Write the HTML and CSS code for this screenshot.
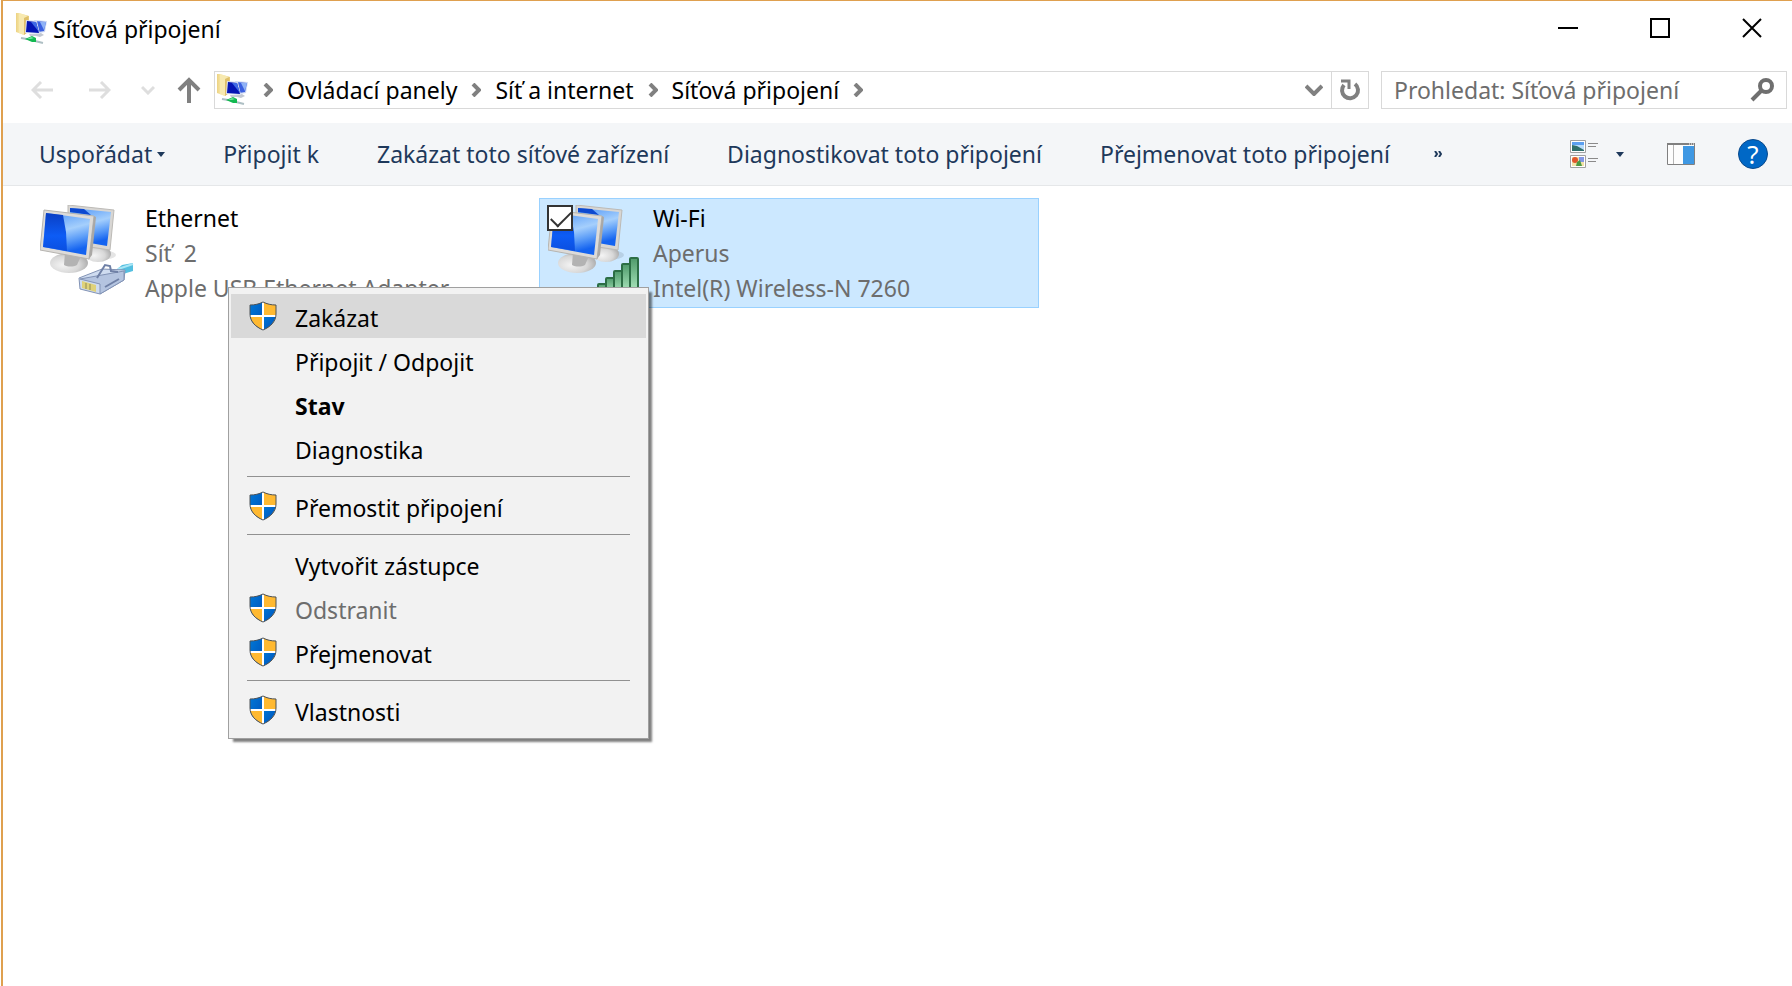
FILE: index.html
```html
<!DOCTYPE html>
<html lang="cs">
<head>
<meta charset="UTF-8">
<meta name="viewport" content="width=device-width, initial-scale=1.0">
<title>Síťová připojení</title>
<link rel="stylesheet" href="styles.css">
</head>
<body>

<!-- Shared icons -->
<svg class="sprite" aria-hidden="true">
    <defs>
        <linearGradient id="screen" x1="0" y1="0" x2="0.3" y2="1">
            <stop offset="0" stop-color="#4b93f8"/>
            <stop offset="0.5" stop-color="#a5cffc"/>
            <stop offset="0.75" stop-color="#5c9df8"/>
            <stop offset="1" stop-color="#1463f0"/>
        </linearGradient>
        <linearGradient id="screenDark" x1="0" y1="0" x2="0" y2="1">
            <stop offset="0" stop-color="#0a3fc4"/>
            <stop offset="0.6" stop-color="#0d5cf5"/>
            <stop offset="1" stop-color="#0a4fe0"/>
        </linearGradient>
        <radialGradient id="stand" cx="0.35" cy="0.6" r="0.7">
            <stop offset="0" stop-color="#f4f4f4"/>
            <stop offset="0.6" stop-color="#d8d8d8"/>
            <stop offset="1" stop-color="#a8a8a8"/>
        </radialGradient>
        <linearGradient id="bar" x1="0" y1="0" x2="0" y2="1">
            <stop offset="0" stop-color="#4f9a6b"/>
            <stop offset="1" stop-color="#b4efc6"/>
        </linearGradient>
        <linearGradient id="folder" x1="0" y1="0" x2="1" y2="0">
            <stop offset="0" stop-color="#ecd282"/>
            <stop offset="0.4" stop-color="#fbeeb4"/>
            <stop offset="1" stop-color="#e3c878"/>
        </linearGradient>
        <linearGradient id="blueShield" x1="0" y1="0" x2="1" y2="1">
            <stop offset="0" stop-color="#0078d7"/>
            <stop offset="1" stop-color="#0050b8"/>
        </linearGradient>
    </defs>

    <symbol id="network-folder" viewBox="0 0 32 32">
        <path d="M0 0h3l10 3v15l-5 4-8-3z" fill="url(#folder)"/>
        <path d="M3 0l9 3v4L8 6v16l-5-2z" fill="#f7e9b0"/>
        <path d="M8 5l4-2v16l-4 3z" fill="#dfc06a"/>
        <path d="M20 21l5-1 3 2-4 2-4-1z" fill="#c2c8d2"/>
        <path d="M18 7l13 1-2 11-6 1z" fill="#cfdaf2"/>
        <path d="M19 8l11 1-2 9-6 1z" fill="#3a5fe0"/>
        <path d="M24 9l6 0-2 8z" fill="#8fb2f6"/>
        <path d="M10 7l11 1 3 13-15-1z" fill="#d5ddf0"/>
        <path d="M11 8l9 1 3 11-13-1z" fill="#0414b4"/>
        <path d="M15 9l5 0 3 10z" fill="#3f6ae6"/>
        <path d="M13 21l7 0 1 2-7 0z" fill="#c6ccd6"/>
        <path d="M5 25l6 1M19 28l8 2" stroke="#aebfc4" stroke-width="2"/>
        <path d="M9 26l7-3 4 2 0 4-4 0z" fill="#12b850"/>
        <path d="M11 26l4-2 3 1-3 1z" fill="#6fe29a"/>
    </symbol>

    <symbol id="monitors" viewBox="0 0 94 91">
        <ellipse cx="67" cy="50" rx="9" ry="4" fill="#000" opacity="0.1"/>
        <ellipse cx="58" cy="49" rx="13" ry="8" fill="url(#stand)"/>
        <path d="M28 0l46 5-4 40-20-3-22-6z" fill="#d8d6d3" stroke="#bcbab6"/>
        <path d="M30 3l41 4-4 34-17-3-20-5z" fill="url(#screen)"/>
        <path d="M30 3l14 1 7 6-21-3z" fill="#0d49d0"/>
        <ellipse cx="29" cy="58" rx="19" ry="10" fill="url(#stand)"/>
        <path d="M25 47l16 4-4 9c-4 2-9 2-13 0z" fill="#b3b3b3"/>
        <path d="M4 5l50 6-5 43L0 45z" fill="#dddbd8" stroke="#b6b4b0"/>
        <path d="M54 11l2 1-4 38-3 4z" fill="#aaa8a5"/>
        <path d="M6 8l44 6-4 36-43-8z" fill="url(#screen)"/>
        <path d="M6 8l17 2 3 17 1 19-24-4z" fill="url(#screenDark)"/>
    </symbol>

    <symbol id="shield" viewBox="0 0 28 30">
        <path d="M14 1C10 3 6 4 1 4v9c0 8 6 13 13 16z" fill="url(#blueShield)"/>
        <path d="M14 1c4 2 8 3 13 3v9c0 8-6 13-13 16z" fill="#ffb931"/>
        <path d="M1 14h13v15C7 26 2 21 1 14z" fill="#ffb931"/>
        <path d="M27 14H14v15c7-3 12-8 13-15z" fill="url(#blueShield)"/>
        <path d="M14 1v28M1 15h26" stroke="#fff" stroke-width="2"/>
        <path d="M14 1C10 3 6 4 1 4v9c0 8 6 13 13 16 7-3 13-8 13-16V4C22 4 18 3 14 1z" fill="none" stroke="#4d5257"/>
    </symbol>

    <symbol id="crumb-arrow" viewBox="0 0 10 14">
        <path d="M2 1l6 6-6 6" fill="none" stroke="#808080" stroke-width="4"/>
    </symbol>
</svg>

<div class="window">
    <header class="titlebar">
        <svg class="app-icon"><use href="#network-folder"/></svg>
        <h1>Síťová připojení</h1>
        <div class="window-buttons">
            <button type="button" aria-label="Minimalizovat">
                <svg width="20" height="20"><path d="M0 10h20" stroke="#000" stroke-width="2"/></svg>
            </button>
            <button type="button" aria-label="Maximalizovat">
                <svg width="20" height="20"><path d="M1 1h18v18H1z" fill="none" stroke="#000" stroke-width="2"/></svg>
            </button>
            <button type="button" aria-label="Zavřít">
                <svg width="20" height="20"><path d="M1 1l18 18M19 1L1 19" stroke="#000" stroke-width="2"/></svg>
            </button>
        </div>
    </header>

    <div class="navbar">
        <div class="nav-buttons">
            <button type="button" aria-label="Zpět" disabled>
                <svg width="22" height="18"><path d="M22 9H2M10 1L2 9l8 8" fill="none" stroke="#dedede" stroke-width="3"/></svg>
            </button>
            <button type="button" aria-label="Vpřed" disabled>
                <svg width="22" height="18"><path d="M0 9h20M12 1l8 8-8 8" fill="none" stroke="#dedede" stroke-width="3"/></svg>
            </button>
            <button type="button" class="recent" aria-label="Poslední umístění" disabled>
                <svg width="14" height="10"><path d="M1 2l6 6 6-6" fill="none" stroke="#dedede" stroke-width="3"/></svg>
            </button>
            <button type="button" class="up" aria-label="Nahoru">
                <svg width="24" height="26"><path d="M12 26V3M2 13L12 3l10 10" fill="none" stroke="#808080" stroke-width="4"/></svg>
            </button>
        </div>

        <div class="address">
            <svg class="app-icon"><use href="#network-folder"/></svg>
            <nav class="crumbs">
                <svg class="crumb-arrow"><use href="#crumb-arrow"/></svg>
                <a href="#">Ovládací panely</a>
                <svg class="crumb-arrow"><use href="#crumb-arrow"/></svg>
                <a href="#">Síť a internet</a>
                <svg class="crumb-arrow"><use href="#crumb-arrow"/></svg>
                <a href="#">Síťová připojení</a>
                <svg class="crumb-arrow"><use href="#crumb-arrow"/></svg>
            </nav>
            <button type="button" class="history" aria-label="Předchozí umístění">
                <svg width="18" height="12"><path d="M1 2l8 8 8-8" fill="none" stroke="#808080" stroke-width="4"/></svg>
            </button>
            <button type="button" class="refresh" aria-label="Aktualizovat">
                <svg width="22" height="22">
                    <path d="M5 6a8 8 0 1 0 11-1" fill="none" stroke="#808080" stroke-width="4"/>
                    <path d="M2 2h8v8" fill="none" stroke="#808080" stroke-width="3"/>
                </svg>
            </button>
        </div>

        <div class="search">
            <input type="search" aria-label="Prohledat" placeholder="Prohledat: Síťová připojení">
            <svg width="24" height="24">
                <circle cx="16" cy="8" r="6" fill="none" stroke="#6f6f6f" stroke-width="4"/>
                <path d="M11 13L2 22" stroke="#6f6f6f" stroke-width="4"/>
            </svg>
        </div>
    </div>

    <div class="toolbar">
        <div class="commands">
            <button type="button">Uspořádat
                <svg width="8" height="5"><path d="M0 0h8L4 5z" fill="#1e395b"/></svg>
            </button>
            <button type="button">Připojit k</button>
            <button type="button">Zakázat toto síťové zařízení</button>
            <button type="button">Diagnostikovat toto připojení</button>
            <button type="button">Přejmenovat toto připojení</button>
            <button type="button" class="more" aria-label="Další příkazy">
                <svg width="8" height="6"><path d="M1 0l2 3-2 3M5 0l2 3-2 3" fill="none" stroke="#1e395b" stroke-width="2"/></svg>
            </button>
        </div>
        <div class="view-buttons">
            <button type="button" class="view-mode" aria-label="Zobrazení">
                <svg width="28" height="28">
                    <path d="M.5 .5h15v12h-15zM.5 15.500h15v12h-15z" fill="#fff" stroke="#a0a0a0"/>
                    <path d="M2 2h12v9H2z" fill="#b9dcfa"/>
                    <path d="M2 2h12v3H2z" fill="#5b9ff0"/>
                    <path d="M2 5l5 1 7 4v1H2z" fill="#2f6f6b"/>
                    <path d="M2 17h12v9H2z" fill="#f3e3a8"/>
                    <path d="M9 17h5v5H9z" fill="#8397e6"/>
                    <circle cx="5" cy="20" r="3" fill="#e0562c"/>
                    <path d="M6 26l1-4 3-2 2 6z" fill="#4c9a44"/>
                    <path d="M18 3.500h10M18 6.500h8M18 18.500h10M18 21.500h8" stroke="#8a8a8a"/>
                </svg>
                <svg width="8" height="5"><path d="M0 0h8L4 5z" fill="#1e395b"/></svg>
            </button>
            <button type="button" aria-label="Podokno náhledu">
                <svg width="28" height="22">
                    <path d="M.5 1.500h27v20H.5z" fill="#fdfdfd" stroke="#808080"/>
                    <path d="M0 1h28" stroke="#808080" stroke-width="2"/>
                    <path d="M6.500 2v19" stroke="#b5b5b5"/>
                    <path d="M16 3h11v18H16z" fill="#3f98e3"/>
                    <path d="M22 1h1M24 1h1M26 1h1" stroke="#fff"/>
                </svg>
            </button>
            <button type="button" class="help" aria-label="Nápověda">?</button>
        </div>
    </div>

    <main class="content">
        <div class="connections">
            <article class="connection">
                <svg class="connection-icon">
                    <use href="#monitors"/>
                    <path d="M76 65l6-5 11-2v8l-10 3z" fill="#54bfe0"/>
                    <path d="M78 64l15-5" stroke="#a9e6f6" stroke-width="2"/>
                    <path d="M39 73l23-9 23 1-1 10-24 14-20-5z" fill="#cfdcf0" stroke="#8293b5"/>
                    <path d="M40 74l20 5v10l24-14V66z" fill="#b4c4e0" stroke="#8293b5"/>
                    <path d="M57 73l8-13 5 1 1 5 7 1M65 82l14-8" fill="none" stroke="#6f80a6" stroke-width="2"/>
                    <path d="M42 76l14 4v7l-14-4z" fill="#dfd27a"/>
                    <path d="M46 78v6M50 79v6" stroke="#8f8a55"/>
                </svg>
                <div class="details">
                    <h2>Ethernet</h2>
                    <p>Síť&nbsp; 2</p>
                    <p>Apple USB Ethernet Adapter</p>
                </div>
            </article>

            <article class="connection selected">
                <input type="checkbox" class="check" aria-label="Wi-Fi" checked>
                <svg class="connection-icon">
                    <use href="#monitors"/>
                    <g fill="url(#bar)" stroke="#2c6e45" stroke-width="2">
                        <rect x="50" y="79" width="8" height="11" rx="1"/>
                        <rect x="58" y="73" width="8" height="17" rx="1"/>
                        <rect x="66" y="66" width="8" height="24" rx="1"/>
                        <rect x="74" y="59" width="8" height="31" rx="1"/>
                        <rect x="82" y="53" width="8" height="37" rx="1"/>
                    </g>
                </svg>
                <div class="details">
                    <h2>Wi-Fi</h2>
                    <p>Aperus</p>
                    <p>Intel(R) Wireless-N 7260</p>
                </div>
            </article>
        </div>

        <div class="context-menu" role="menu">
            <button type="button" role="menuitem" class="active"><svg><use href="#shield"/></svg>Zakázat</button>
            <button type="button" role="menuitem"><svg></svg>Připojit / Odpojit</button>
            <button type="button" role="menuitem" class="default"><svg></svg>Stav</button>
            <button type="button" role="menuitem"><svg></svg>Diagnostika</button>
            <hr>
            <button type="button" role="menuitem"><svg><use href="#shield"/></svg>Přemostit připojení</button>
            <hr>
            <button type="button" role="menuitem"><svg></svg>Vytvořit zástupce</button>
            <button type="button" role="menuitem" disabled><svg><use href="#shield"/></svg>Odstranit</button>
            <button type="button" role="menuitem"><svg><use href="#shield"/></svg>Přejmenovat</button>
            <hr>
            <button type="button" role="menuitem"><svg><use href="#shield"/></svg>Vlastnosti</button>
        </div>
    </main>
</div>

</body>
</html>
```
FILE: styles.css
```css
/* Reset and basic styles */
* {
    box-sizing: border-box;
}
body {
    margin: 0;
    background-color: #fff;
    color: #000;
    font-family: 'Noto Sans', 'Open Sans', sans-serif;
    font-size: 23px;
    line-height: 35px;
}
h1, h2, p {
    margin: 0;
    font-size: inherit;
    font-weight: normal;
}
button {
    display: flex;
    align-items: center;
    padding: 0;
    border: none;
    background: none;
    color: inherit;
    font: inherit;
    white-space: nowrap;
}
svg {
    display: block;
    flex: none;
}
.sprite {
    position: absolute;
    width: 0;
    height: 0;
}
.window {
    min-height: 100vh;
    margin-left: 1px;
    border-top: 1px solid #dfa04f;
    border-left: 2px solid #dfa04f;
}
.app-icon {
    width: 32px;
    height: 32px;
}

/* Title bar */
.titlebar {
    display: flex;
    align-items: center;
    height: 56px;
    padding: 0 30px 0 13px;
}
.titlebar h1 {
    margin-left: 5px;
}
.window-buttons {
    display: flex;
    gap: 72px;
    margin: 0 0 2px auto;
}

/* Navigation row */
.navbar {
    display: flex;
    align-items: center;
    height: 66px;
    padding: 0 5px 0 28px;
}
.nav-buttons {
    display: flex;
    align-items: center;
    gap: 36px;
    margin-right: 13px;
}
.nav-buttons .recent {
    margin-left: -6px;
}
.nav-buttons .up {
    margin-left: -14px;
}
.address {
    display: flex;
    align-items: center;
    flex: 1;
    height: 38px;
    margin-right: 12px;
    padding-left: 2px;
    border: 1px solid #d9d9d9;
}
.crumbs {
    display: flex;
    align-items: center;
    gap: 14px;
    margin-left: 14px;
}
.crumbs a {
    color: inherit;
    text-decoration: none;
}
.crumb-arrow {
    width: 10px;
    height: 14px;
}
.address .history {
    margin-left: auto;
    padding: 0 8px;
}
.address .refresh {
    height: 36px;
    padding: 0 7px;
    border-left: 1px solid #d9d9d9;
}
.search {
    display: flex;
    align-items: center;
    width: 406px;
    height: 38px;
    padding: 0 12px;
    border: 1px solid #d9d9d9;
}
.search input {
    flex: 1;
    min-width: 0;
    padding: 0;
    border: none;
    outline: none;
    background: none;
    font: inherit;
}
.search input::placeholder {
    color: #6d6d6d;
    opacity: 1;
}

/* Command bar */
.toolbar {
    display: flex;
    align-items: center;
    justify-content: space-between;
    height: 63px;
    padding: 0 24px 0 36px;
    border-bottom: 1px solid #e5e7e9;
    background-color: #f4f6f8;
    color: #1e395b;
}
.commands {
    display: flex;
    align-items: center;
    gap: 58px;
}
.commands button {
    gap: 5px;
}
.commands .more {
    margin-left: -14px;
}
.view-buttons {
    display: flex;
    align-items: center;
    gap: 43px;
}
.view-buttons .view-mode {
    gap: 18px;
}
.view-buttons .help {
    justify-content: center;
    width: 30px;
    height: 30px;
    border: 1px solid #0a4a8c;
    border-radius: 50%;
    background-color: #0068c6;
    color: #fff;
    font-size: 26px;
}

/* Connection list */
.content {
    position: relative;
    padding: 12px 28px;
}
.connections {
    display: flex;
    flex-wrap: wrap;
    gap: 8px;
}
.connection {
    position: relative;
    display: flex;
    gap: 11px;
    width: 500px;
    padding: 2px 8px 1px;
    border: 1px solid transparent;
}
.connection.selected {
    border-color: #99d1ff;
    background-color: #cce8ff;
}
.connection-icon {
    width: 94px;
    height: 95px;
    padding-top: 4px;
}
.details p {
    color: #6d6d6d;
}
.check {
    position: absolute;
    top: 6px;
    left: 7px;
    width: 26px;
    height: 26px;
    margin: 0;
    border: 2px solid #333;
    background-color: #fff;
    appearance: none;
}
.check:checked::after {
    content: "";
    display: block;
    width: 18px;
    height: 9px;
    margin: 4px 0 0 2px;
    border-bottom: 2px solid #333;
    border-left: 2px solid #333;
    transform: rotate(-45deg);
}

/* Context menu */
.context-menu {
    position: absolute;
    top: 101px;
    left: 225px;
    width: 421px;
    padding: 6px 2px;
    border: 1px solid #a0a0a0;
    background-color: #f2f2f2;
    box-shadow: 4px 4px 2px -1px rgba(0, 0, 0, 0.5);
}
.context-menu button {
    gap: 18px;
    width: 100%;
    height: 44px;
    padding: 4px 0 0 18px;
}
.context-menu svg {
    width: 28px;
    height: 30px;
    margin-bottom: 4px;
}
.context-menu .active {
    background-color: #d9d9d9;
}
.context-menu .default {
    font-weight: bold;
}
.context-menu button:disabled {
    color: #6d6d6d;
}
.context-menu hr {
    height: 1px;
    margin: 6px 16px 7px;
    border: none;
    background-color: #919191;
}
```
